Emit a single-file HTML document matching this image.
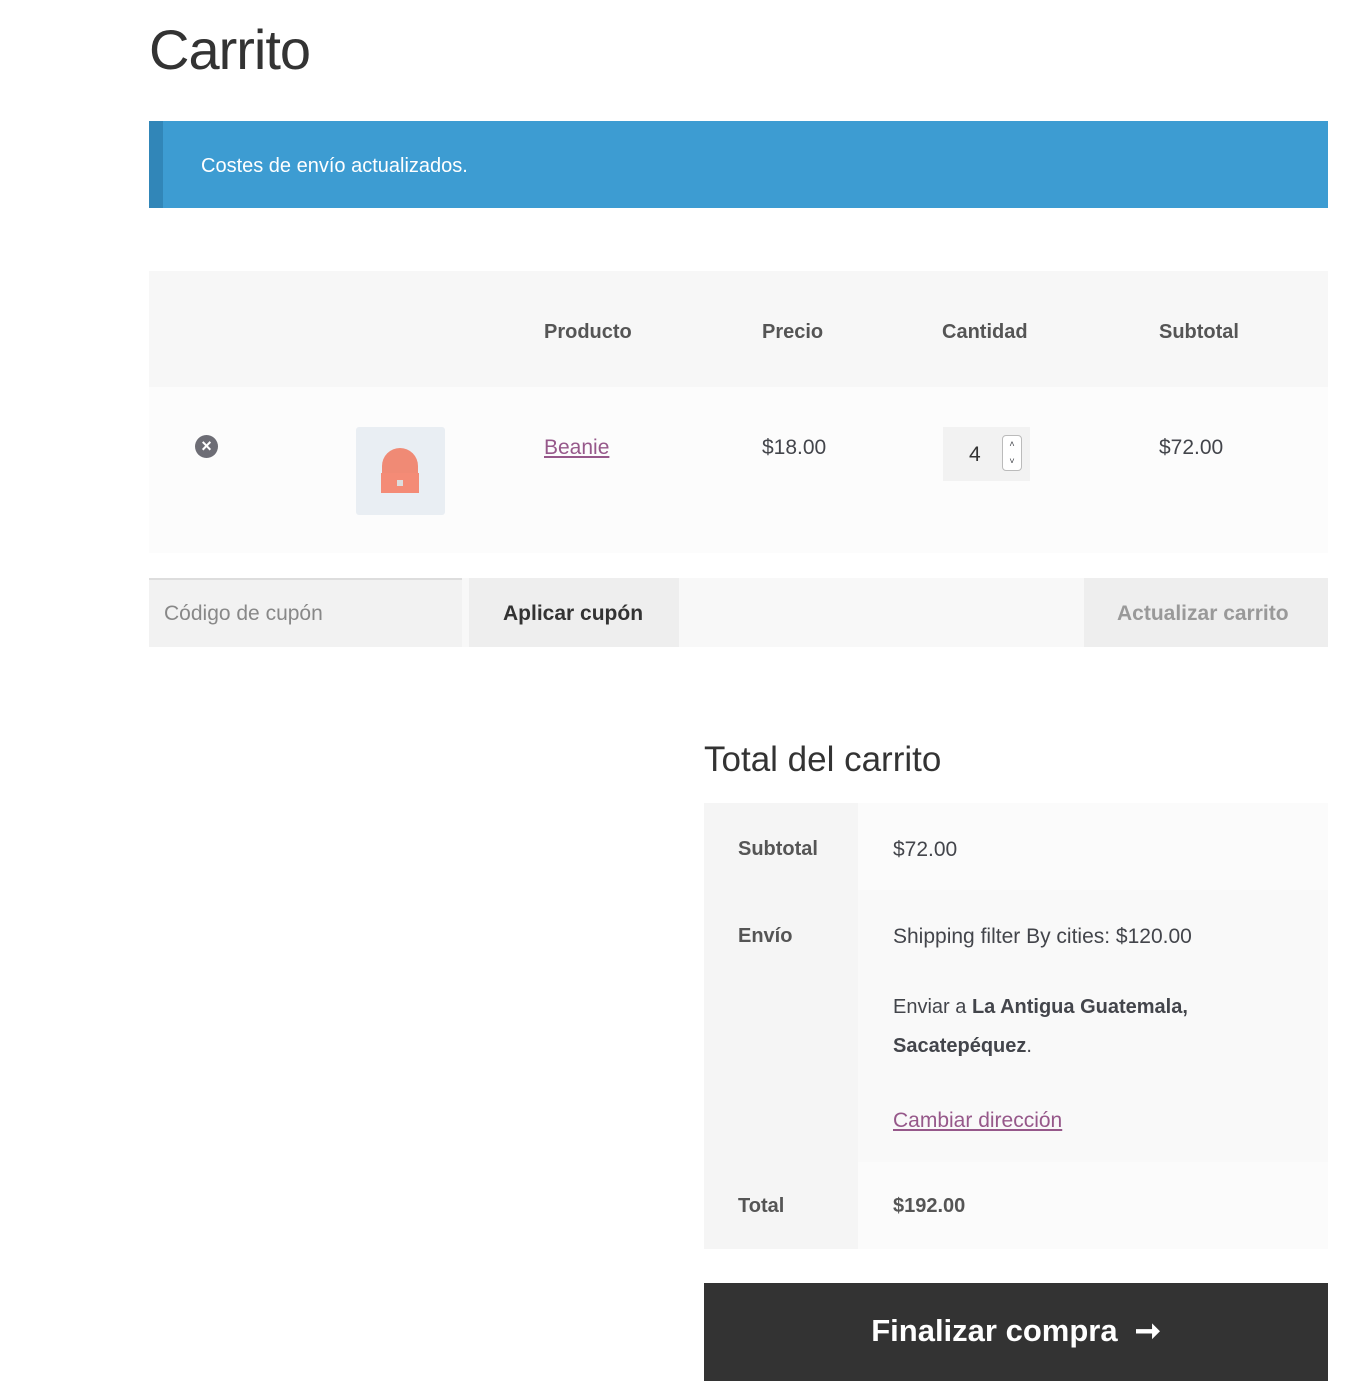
<!DOCTYPE html>
<html><head><meta charset="utf-8"><style>
body{margin:0;background:#fff;font-family:"Liberation Sans",sans-serif;color:#43454b;width:1363px;height:1396px;position:relative;overflow:hidden}
.a{position:absolute}
h1{position:absolute;left:149px;top:17px;margin:0;font-weight:300;font-size:56px;color:#333;letter-spacing:-1px}
.b{font-weight:bold;color:#555}
</style></head><body>
<h1>Carrito</h1>
<div class="a" style="left:149px;top:121px;width:1179px;height:87px;background:#3d9cd2"></div>
<div class="a" style="left:149px;top:121px;width:14px;height:87px;background:#3186b8"></div>
<div class="a" style="left:201px;top:155px;color:#fff;font-size:20px">Costes de envío actualizados.</div>

<div class="a" style="left:149px;top:271px;width:1179px;height:116px;background:#f7f7f7"></div>
<div class="a b" style="left:544px;top:321px;font-size:20px">Producto</div>
<div class="a b" style="left:762px;top:321px;font-size:20px">Precio</div>
<div class="a b" style="left:942px;top:321px;font-size:20px">Cantidad</div>
<div class="a b" style="left:1159px;top:321px;font-size:20px">Subtotal</div>

<div class="a" style="left:149px;top:387px;width:1179px;height:166px;background:#fcfcfc"></div>
<div class="a" style="left:195px;top:435px;width:23px;height:23px;border-radius:50%;background:#6d6d75;color:#fff;font-size:18px;font-weight:bold;text-align:center;line-height:23px">×</div>
<div class="a" style="left:356px;top:427px;width:89px;height:88px;background:#e9eef3;border-radius:3px"></div>
<div class="a" style="left:382px;top:448px;width:36px;height:26px;background:#f08a75;border-radius:18px 18px 0 0"></div>
<div class="a" style="left:381px;top:473px;width:38px;height:20px;background:#f48b76"></div>
<div class="a" style="left:397px;top:480px;width:6px;height:6px;background:#ddd"></div>
<div class="a" style="left:544px;top:436px;font-size:21px;color:#96588a;text-decoration:underline">Beanie</div>
<div class="a" style="left:762px;top:436px;font-size:21px">$18.00</div>
<div class="a" style="left:943px;top:427px;width:87px;height:54px;background:#f2f2f2"></div>
<div class="a" style="left:969px;top:443px;font-size:21px;color:#333">4</div>
<div class="a" style="left:1002px;top:435px;width:18px;height:34px;border:1px solid #bbb;border-radius:4px;background:#fff;font-size:9px;text-align:center;line-height:17px">˄<br>˅</div>
<div class="a" style="left:1159px;top:436px;font-size:21px">$72.00</div>

<div class="a" style="left:149px;top:578px;width:1179px;height:69px;background:#f8f8f8"></div>
<div class="a" style="left:149px;top:578px;width:313px;height:67px;background:#f2f2f2;border-top:2px solid #ddd"></div>
<div class="a" style="left:164px;top:602px;font-size:21px;color:#888">Código de cupón</div>
<div class="a" style="left:469px;top:578px;width:210px;height:69px;background:#eee"></div>
<div class="a" style="left:503px;top:602px;font-size:21px;font-weight:bold;color:#333">Aplicar cupón</div>
<div class="a" style="left:1084px;top:578px;width:244px;height:69px;background:#eee"></div>
<div class="a" style="left:1117px;top:602px;font-size:21px;font-weight:bold;color:#999">Actualizar carrito</div>

<div class="a" style="left:704px;top:740px;font-size:35px;font-weight:300;color:#333">Total del carrito</div>
<div class="a" style="left:704px;top:803px;width:624px;height:446px;background:#fbfbfb"></div>
<div class="a" style="left:704px;top:803px;width:154px;height:446px;background:#f5f5f5"></div>
<div class="a" style="left:858px;top:890px;width:470px;height:272px;background:#f9f9f9"></div>
<div class="a b" style="left:738px;top:838px;font-size:20px">Subtotal</div>
<div class="a" style="left:893px;top:838px;font-size:21px">$72.00</div>
<div class="a b" style="left:738px;top:925px;font-size:20px">Envío</div>
<div class="a" style="left:893px;top:925px;font-size:21px">Shipping filter By cities: $120.00</div>
<div class="a" style="left:893px;top:988px;font-size:20px;line-height:39px;width:400px">Enviar a <b>La Antigua Guatemala, Sacatepéquez</b>.</div>
<div class="a" style="left:893px;top:1109px;font-size:21px;color:#96588a;text-decoration:underline">Cambiar dirección</div>
<div class="a b" style="left:738px;top:1195px;font-size:20px">Total</div>
<div class="a b" style="left:893px;top:1195px;font-size:20px">$192.00</div>
<div class="a" style="left:704px;top:1283px;width:624px;height:98px;background:#333;color:#fff;font-size:31px;font-weight:bold;text-align:center;line-height:96px">Finalizar compra &nbsp;➞</div>
</body></html>
